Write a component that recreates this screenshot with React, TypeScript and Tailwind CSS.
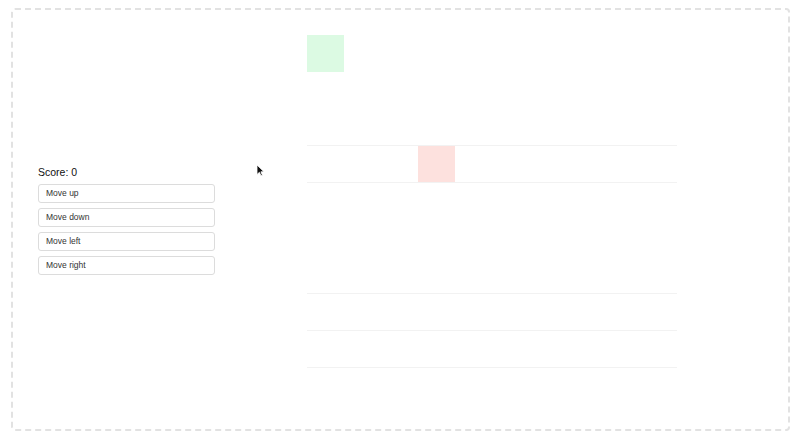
import React from "react";

const SIZE = 10;
const PLAYER = { row: 0, col: 0 };
const TARGET = { row: 3, col: 3 };
// faint ghost lines left over in the capture (bottom edge of these rows)
const LINE_ROWS = [2, 3, 6, 7, 8];

const MOVES = ["Move up", "Move down", "Move left", "Move right"];

const Cursor = () => (
  <svg
    className="absolute left-[256px] top-[164px]"
    width="9"
    height="13"
    viewBox="0 0 9 13"
  >
    <path
      d="M1 1 L1 10.5 L3.4 8.3 L5 11.8 L6.4 11.2 L4.9 7.8 L8 7.8 Z"
      fill="#111"
      stroke="#fff"
      strokeWidth="0.8"
    />
  </svg>
);

export default function App() {
  return (
    <div className="relative w-[800px] h-[441px] pt-[8px] bg-white font-['Liberation_Sans',Arial,sans-serif]">
      <div className="ml-[11px] w-[779px] h-[423px] border-2 border-dashed border-[#e2e2e2] rounded-[4px] flex items-center">
        {/* Controls */}
        <div className="ml-[25px] mt-[2px] w-[177px] flex flex-col">
          <div className="text-[10.5px] leading-[12px] text-[#111] mb-[6px]">Score: 0</div>
          <div className="flex flex-col gap-[5px]">
            {MOVES.map((m) => (
              <button
                key={m}
                className="h-[19px] w-full text-left pl-[7px] text-[8.5px] text-[#333] border border-[#dcdcdc] rounded-[3px] bg-white"
              >
                {m}
              </button>
            ))}
          </div>
        </div>

        {/* Board */}
        <div className="ml-[92px] w-[370px] flex flex-col">
          {Array.from({ length: SIZE }).map((_, r) => (
            <div
              key={r}
              className={`flex h-[37px] ${
                LINE_ROWS.includes(r) ? "border-b border-[#f2f2f2]" : ""
              }`}
            >
              {Array.from({ length: SIZE }).map((_, c) => {
                const isPlayer = r === PLAYER.row && c === PLAYER.col;
                const isTarget = r === TARGET.row && c === TARGET.col;
                return (
                  <div
                    key={c}
                    className={`w-[37px] h-full ${
                      isPlayer ? "bg-[#dcfae3]" : isTarget ? "bg-[#fde1de]" : ""
                    }`}
                  />
                );
              })}
            </div>
          ))}
        </div>
      </div>
      <Cursor />
    </div>
  );
}
